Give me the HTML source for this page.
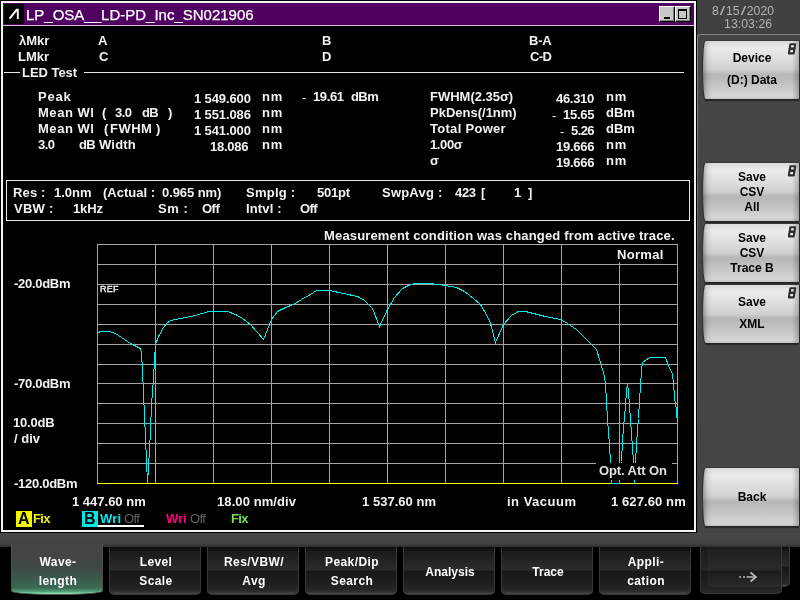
<!DOCTYPE html>
<html><head><meta charset="utf-8"><title>OSA</title>
<style>
html,body{margin:0;padding:0;background:#000;}
body{width:800px;height:600px;position:relative;overflow:hidden;font-family:"Liberation Sans",sans-serif;}
#all{position:absolute;left:0;top:0;width:800px;height:600px;will-change:transform;}
#rp{position:absolute;left:697px;top:0;width:103px;height:546px;background:#414141;}
#rpf{position:absolute;left:697px;top:34px;width:110px;height:512px;background:#454545;border-radius:4px 0 0 0;box-sizing:border-box;border-top:1px solid #868686;}
#rpf:before{content:"";position:absolute;left:0;top:0;width:1px;height:100%;border-radius:4px 0 0 0;background:linear-gradient(#868686 0,#707070 30%,#3a3a3a 100%);}
#win{position:absolute;left:1px;top:1px;width:691px;height:527px;border:2px solid #f4f4f4;background:#000;}
#title{position:absolute;left:3px;top:3px;width:691px;height:22px;background:#500060;border-bottom:1px solid #c8c8c8;}
#ticon{position:absolute;left:4px;top:4px;width:20px;height:20px;background:#000;}
#ttext{-webkit-text-stroke:0.25px #fff;position:absolute;left:26px;top:6px;color:#fff;font-size:15px;line-height:18px;white-space:nowrap;letter-spacing:0}
.wb{position:absolute;top:6px;width:14px;height:14px;background:#c8c8c8;border:1px solid;border-color:#fff #000 #000 #fff;box-shadow:inset -1px -1px 0 #808080;}
.t{position:absolute;white-space:pre;color:#f2f2f2;font-size:13px;line-height:16px;font-weight:bold;}
.b{font-weight:bold;}
.date{position:absolute;color:#b4b4b4;font-size:12.2px;line-height:14px;white-space:nowrap;letter-spacing:0.1px}
.date i{font-style:normal;display:inline-block;padding:0 1.75px;transform:scaleX(1.6)}
.rb{position:absolute;left:703px;width:96px;height:58px;border-radius:2.5px 0 0 2.5px / 29px 0 0 29px;background:linear-gradient(90deg,rgba(0,0,0,.30) 0,rgba(0,0,0,.08) 4px,rgba(0,0,0,0) 9px,rgba(0,0,0,0) 89px,rgba(0,0,0,.22) 96px),linear-gradient(#dadada 0%,#ebebeb 12%,#dcdcdc 35%,#d0d0d0 50%,#b8b8b8 57%,#bababa 64%,#d6d6d6 95%,#c4c4c4 100%);box-shadow:-1px 0 0 #303030,0 -1px 0 #383838,0 2px 1px #262626,1px 0 0 #2a2a2a;}
.rbt{position:absolute;left:0;width:98px;top:-1px;height:58px;display:flex;flex-direction:column;justify-content:center;text-align:center;color:#000;font-weight:bold;font-size:12px;}
.rb.l2 .rbt div{line-height:22px}
.rb.l3 .rbt{top:0}
.rb.l1 .rbt{top:0}
.rb.l3 .rbt div{line-height:15px}
.ic{position:absolute;left:84px;top:2px;}
#bbar{position:absolute;left:0;top:533px;width:800px;height:14px;background:linear-gradient(#474747,#444 75%,#2e2e2e);}
.bb{position:absolute;top:547px;width:92px;height:48px;border-radius:0 0 6px 6px / 0 0 4px 4px;background:linear-gradient(#0c0c0c 0%,#1a1a1a 10%,#242424 30%,#2c2c2c 48%,#181818 52%,#202020 80%,#2a2a2a 94%,#4a4a4a 100%);border:1px solid #383838;border-top:none;box-sizing:border-box}
.bb.act{top:544px;height:51px;background:linear-gradient(#444 0%,#434443 12%,#3f4843 45%,#3b584a 68%,#3a6a54 88%,#55a07c 95%,#98e8c0 100%);border-color:#4e4e4e;border-radius:0 0 40px 40px / 0 0 4px 4px;z-index:2}
.bb.act .bbt{top:4px}
.bb.one .bbt{top:1px;letter-spacing:0}
.bbt{position:absolute;left:1px;top:1px;letter-spacing:0.4px;width:100%;height:48px;display:flex;flex-direction:column;justify-content:center;text-align:center;color:#fff;font-weight:bold;font-size:12px;line-height:19px}
</style></head><body><div id="all">
<div id="rp"></div><div id="rpf"></div>
<div class="date" style="left:712px;top:4px">8<i>/</i>15<i>/</i>2020</div><div class="date" style="left:724px;top:17px">13:03:26</div>
<div class="rb l2" style="top:41px"><div class="rbt"><div>Device</div><div>(D:) Data</div></div><svg class="ic" width="10" height="12" viewBox="0 0 10 12"><g fill="rgba(255,255,255,.35)" stroke="#2e2e2e" stroke-width="2.1" stroke-linejoin="round"><path d="M3.4 1.2 H8.2 L7.5 5.6 H2.7 Z"/><path d="M2.6 5.9 H7.4 L6.7 10.4 H1.9 Z"/></g></svg></div>
<div class="rb l3" style="top:163px"><div class="rbt"><div>Save</div><div>CSV</div><div>All</div></div><svg class="ic" width="10" height="12" viewBox="0 0 10 12"><g fill="rgba(255,255,255,.35)" stroke="#2e2e2e" stroke-width="2.1" stroke-linejoin="round"><path d="M3.4 1.2 H8.2 L7.5 5.6 H2.7 Z"/><path d="M2.6 5.9 H7.4 L6.7 10.4 H1.9 Z"/></g></svg></div>
<div class="rb l3" style="top:224px"><div class="rbt"><div>Save</div><div>CSV</div><div>Trace B</div></div><svg class="ic" width="10" height="12" viewBox="0 0 10 12"><g fill="rgba(255,255,255,.35)" stroke="#2e2e2e" stroke-width="2.1" stroke-linejoin="round"><path d="M3.4 1.2 H8.2 L7.5 5.6 H2.7 Z"/><path d="M2.6 5.9 H7.4 L6.7 10.4 H1.9 Z"/></g></svg></div>
<div class="rb l2" style="top:285px"><div class="rbt"><div>Save</div><div>XML</div></div><svg class="ic" width="10" height="12" viewBox="0 0 10 12"><g fill="rgba(255,255,255,.35)" stroke="#2e2e2e" stroke-width="2.1" stroke-linejoin="round"><path d="M3.4 1.2 H8.2 L7.5 5.6 H2.7 Z"/><path d="M2.6 5.9 H7.4 L6.7 10.4 H1.9 Z"/></g></svg></div>
<div class="rb l1" style="top:468px"><div class="rbt"><div>Back</div></div></div>
<div id="win"></div>
<div id="title"></div><div id="ticon"><svg width="20" height="20"><path d="M5.6 14.6 L12.6 5.8 L13.8 5.8 L13.8 15" fill="none" stroke="#fff" stroke-width="1.9"/></svg></div>
<div id="ttext">LP_OSA__LD-PD_Inc_SN021906</div>
<div class="wb" style="left:659px"><div style="position:absolute;left:4px;top:10px;width:6px;height:2px;background:#000"></div></div>
<div class="wb" style="left:675px"><div style="position:absolute;left:2px;top:2px;width:7px;height:7px;border:1px solid #000;border-top-width:2px"></div></div>
<div style="position:absolute;left:4px;top:72px;width:16px;height:1px;background:#e8e8e8"></div>
<div style="position:absolute;left:84px;top:72px;width:600px;height:1px;background:#e8e8e8"></div>
<div style="position:absolute;left:6px;top:180px;width:682px;height:39px;border:1px solid #e8e8e8"></div>
<svg style="position:absolute;left:0;top:0" width="800" height="600" shape-rendering="crispEdges">
<rect x="97" y="244" width="1" height="239" fill="#a6a6a6"/>
<rect x="155" y="244" width="1" height="239" fill="#a6a6a6"/>
<rect x="213" y="244" width="1" height="239" fill="#a6a6a6"/>
<rect x="271" y="244" width="1" height="239" fill="#a6a6a6"/>
<rect x="329" y="244" width="1" height="239" fill="#a6a6a6"/>
<rect x="387" y="244" width="1" height="239" fill="#a6a6a6"/>
<rect x="445" y="244" width="1" height="239" fill="#a6a6a6"/>
<rect x="503" y="244" width="1" height="239" fill="#a6a6a6"/>
<rect x="561" y="244" width="1" height="239" fill="#a6a6a6"/>
<rect x="619" y="244" width="1" height="239" fill="#a6a6a6"/>
<rect x="677" y="244" width="1" height="239" fill="#a6a6a6"/>
<rect x="97" y="244" width="581" height="1" fill="#a6a6a6"/>
<rect x="97" y="264" width="581" height="1" fill="#a6a6a6"/>
<rect x="97" y="284" width="581" height="1" fill="#a6a6a6"/>
<rect x="97" y="304" width="581" height="1" fill="#a6a6a6"/>
<rect x="97" y="324" width="581" height="1" fill="#a6a6a6"/>
<rect x="97" y="344" width="581" height="1" fill="#a6a6a6"/>
<rect x="97" y="364" width="581" height="1" fill="#a6a6a6"/>
<rect x="97" y="383" width="581" height="1" fill="#a6a6a6"/>
<rect x="97" y="403" width="581" height="1" fill="#a6a6a6"/>
<rect x="97" y="423" width="581" height="1" fill="#a6a6a6"/>
<rect x="97" y="443" width="581" height="1" fill="#a6a6a6"/>
<rect x="97" y="463" width="581" height="1" fill="#a6a6a6"/>
<rect x="97" y="483" width="581" height="1" fill="#ffff00"/>
<polyline points="97.5,332.5 101.5,331.5 109.5,331.5 115.5,333.5 121.5,337.5 130.5,343.5 140.5,348.5 141.5,352.5 142.5,370.5 144.5,415.5 147.5,483.5 149.5,450.5 150.5,430.5 151.5,404.5 153.5,378.5 154.5,360.5 155.5,344.5 158.5,336.5 163.5,327.5 166.5,323.5 170.5,320.5 180.5,318.5 195.5,315.5 208.5,311.5 227.5,311.5 235.5,314.5 242.5,318.5 250.5,324.5 263.5,339.5 267.5,329.5 271.5,319.5 277.5,311.5 285.5,307.5 293.5,304.5 301.5,299.5 310.5,294.5 316.5,290.5 329.5,290.5 343.5,293.5 357.5,296.5 364.5,300.5 372.5,308.5 379.5,326.5 387.5,309.5 394.5,297.5 402.5,288.5 410.5,284.5 416.5,283.5 429.5,283.5 445.5,285.5 456.5,287.5 464.5,291.5 473.5,298.5 480.5,304.5 487.5,316.5 490.5,323.5 495.5,342.5 499.5,333.5 503.5,324.5 511.5,315.5 518.5,311.5 525.5,311.5 545.5,316.5 560.5,319.5 567.5,323.5 576.5,329.5 596.5,349.5 600.5,362.5 604.5,376.5 605.5,385.5 606.5,400.5 607.5,420.5 608.5,430.5 609.5,446.5 610.5,461.5 611.5,483.5 619.5,483.5 621.5,461.5 622.5,441.5 623.5,427.5 625.5,405.5 626.5,391.5 627.5,383.5 628.5,391.5 629.5,405.5 630.5,420.5 631.5,433.5 632.5,448.5 633.5,461.5 634.5,483.5 635.5,461.5 636.5,444.5 637.5,430.5 638.5,418.5 639.5,400.5 640.5,385.5 641.5,370.5 642.5,362.5 649.5,357.5 665.5,357.5 668.5,365.5 672.5,374.5 673.5,382.5 674.5,397.5 676.5,410.5 677.5,425.5 677.5,432.5" fill="none" stroke="#00f0f0" stroke-width="1"/>
<rect x="596" y="463" width="76" height="17" fill="#000"/>
<rect x="616" y="245" width="49" height="17" fill="#000"/>
<rect x="16" y="511" width="16" height="16" fill="#f4f400"/>
<rect x="82" y="511" width="16" height="16" fill="#00e8e8"/>
<rect x="98" y="525" width="46" height="2" fill="#fff"/>
</svg>
<span class="t" style="left:19px;top:33px;">λMkr</span>
<span class="t" style="left:98px;top:33px;">A</span>
<span class="t" style="left:322px;top:33px;">B</span>
<span class="t" style="left:529px;top:33px;letter-spacing:-0.20px;">B-A</span>
<span class="t" style="left:18px;top:49px;">LMkr</span>
<span class="t" style="left:99px;top:49px;">C</span>
<span class="t" style="left:322px;top:49px;">D</span>
<span class="t" style="left:530px;top:49px;letter-spacing:-0.60px;">C-D</span>
<span class="t" style="left:22px;top:65px;letter-spacing:-0.04px;">LED Test</span>
<span class="t" style="left:38px;top:89px;letter-spacing:0.75px;">Peak</span>
<span class="t" style="left:38px;top:105px;letter-spacing:0.54px;">Mean Wl</span>
<span class="t" style="left:102px;top:105px;">(</span>
<span class="t" style="left:115px;top:105px;letter-spacing:-0.50px;">3.0</span>
<span class="t" style="left:142px;top:105px;letter-spacing:-0.60px;">dB</span>
<span class="t" style="left:168px;top:105px;">)</span>
<span class="t" style="left:38px;top:121px;letter-spacing:0.54px;">Mean Wl</span>
<span class="t" style="left:104px;top:121px;">(</span>
<span class="t" style="left:110px;top:121px;letter-spacing:0.50px;">FWHM</span>
<span class="t" style="left:156px;top:121px;">)</span>
<span class="t" style="left:38px;top:137px;letter-spacing:-0.60px;">3.0</span>
<span class="t" style="left:79px;top:137px;letter-spacing:-0.60px;">dB</span>
<span class="t" style="left:99px;top:137px;letter-spacing:0.19px;">Width</span>
<span class="t" style="left:194px;top:91px;letter-spacing:-0.12px;">1 549.600</span>
<span class="t" style="left:194px;top:107px;letter-spacing:-0.12px;">1 551.086</span>
<span class="t" style="left:194px;top:123px;letter-spacing:-0.12px;">1 541.000</span>
<span class="t" style="left:210px;top:139px;letter-spacing:-0.25px;">18.086</span>
<span class="t" style="left:262px;top:89px;letter-spacing:0.75px;">nm</span>
<span class="t" style="left:262px;top:105px;letter-spacing:0.75px;">nm</span>
<span class="t" style="left:262px;top:121px;letter-spacing:0.75px;">nm</span>
<span class="t" style="left:262px;top:137px;letter-spacing:0.75px;">nm</span>
<span class="t" style="left:302px;top:90px;font-weight:normal;">-</span>
<span class="t" style="left:313px;top:89px;letter-spacing:-0.38px;">19.61</span>
<span class="t" style="left:351px;top:89px;letter-spacing:-0.60px;">dBm</span>
<span class="t" style="left:430px;top:89px;letter-spacing:-0.01px;">FWHM(2.35σ)</span>
<span class="t" style="left:430px;top:105px;">PkDens(/1nm)</span>
<span class="t" style="left:430px;top:121px;letter-spacing:0.29px;">Total Power</span>
<span class="t" style="left:430px;top:137px;letter-spacing:-0.38px;">1.00σ</span>
<span class="t" style="left:430px;top:153px;">σ</span>
<span class="t" style="left:556px;top:91px;letter-spacing:-0.30px;">46.310</span>
<span class="t" style="left:552px;top:108px;font-weight:normal;">-</span>
<span class="t" style="left:563px;top:107px;letter-spacing:-0.25px;">15.65</span>
<span class="t" style="left:560px;top:124px;font-weight:normal;">-</span>
<span class="t" style="left:571px;top:123px;letter-spacing:-0.60px;">5.26</span>
<span class="t" style="left:556px;top:139px;letter-spacing:-0.28px;">19.666</span>
<span class="t" style="left:556px;top:155px;letter-spacing:-0.28px;">19.666</span>
<span class="t" style="left:606px;top:89px;letter-spacing:0.90px;">nm</span>
<span class="t" style="left:606px;top:105px;">dBm</span>
<span class="t" style="left:606px;top:121px;">dBm</span>
<span class="t" style="left:606px;top:137px;letter-spacing:0.90px;">nm</span>
<span class="t" style="left:606px;top:153px;letter-spacing:0.90px;">nm</span>
<span class="t" style="left:13px;top:185px;letter-spacing:0.15px;">Res :</span>
<span class="t" style="left:54px;top:185px;">1.0nm</span>
<span class="t" style="left:103px;top:185px;">(Actual :</span>
<span class="t" style="left:162px;top:185px;letter-spacing:-0.07px;">0.965 nm)</span>
<span class="t" style="left:246px;top:185px;letter-spacing:0.25px;">Smplg :</span>
<span class="t" style="left:317px;top:185px;letter-spacing:-0.25px;">501pt</span>
<span class="t" style="left:382px;top:185px;letter-spacing:0.21px;">SwpAvg :</span>
<span class="t" style="left:455px;top:185px;letter-spacing:-0.30px;">423</span>
<span class="t" style="left:481px;top:185px;">[</span>
<span class="t" style="left:514px;top:185px;">1</span>
<span class="t" style="left:528px;top:185px;">]</span>
<span class="t" style="left:14px;top:201px;letter-spacing:0.28px;">VBW :</span>
<span class="t" style="left:73px;top:201px;letter-spacing:-0.13px;">1kHz</span>
<span class="t" style="left:158px;top:201px;letter-spacing:0.53px;">Sm :</span>
<span class="t" style="left:202px;top:201px;letter-spacing:-0.50px;">Off</span>
<span class="t" style="left:246px;top:201px;letter-spacing:0.15px;">Intvl :</span>
<span class="t" style="left:300px;top:201px;letter-spacing:-0.60px;">Off</span>
<span class="t" style="left:324px;top:228px;letter-spacing:0.16px;">Measurement condition was changed from active trace.</span>
<span class="t" style="left:617px;top:247px;letter-spacing:0.32px;">Normal</span>
<span class="t" style="left:14px;top:276px;letter-spacing:-0.29px;">-20.0dBm</span>
<span class="t" style="left:14px;top:376px;letter-spacing:-0.29px;">-70.0dBm</span>
<span class="t" style="left:13px;top:415px;letter-spacing:-0.20px;">10.0dB</span>
<span class="t" style="left:14px;top:431px;">/ div</span>
<span class="t" style="left:14px;top:476px;letter-spacing:-0.28px;">-120.0dBm</span>
<span class="t" style="left:72px;top:494px;">1 447.60 nm</span>
<span class="t" style="left:217px;top:494px;letter-spacing:0.09px;">18.00 nm/div</span>
<span class="t" style="left:362px;top:494px;letter-spacing:0.03px;">1 537.60 nm</span>
<span class="t" style="left:507px;top:494px;letter-spacing:0.49px;">in Vacuum</span>
<span class="t" style="left:611px;top:494px;letter-spacing:0.10px;">1 627.60 nm</span>
<span class="t" style="left:599px;top:463px;color:#e0e0e0;letter-spacing:-0.10px;">Opt. Att On</span>
<span class="t" style="left:33px;top:511px;color:#f0f000;letter-spacing:-0.60px;">Fix</span>
<span class="t" style="left:100px;top:511px;color:#00e8e8;letter-spacing:0.25px;">Wri</span>
<span class="t" style="left:124px;top:511px;font-weight:normal;color:#606060;letter-spacing:-0.60px;">Off</span>
<span class="t" style="left:166px;top:511px;color:#ff0080;">Wri</span>
<span class="t" style="left:190px;top:511px;font-weight:normal;color:#606060;letter-spacing:-0.60px;">Off</span>
<span class="t" style="left:231px;top:511px;color:#70e050;letter-spacing:-0.60px;">Fix</span>
<span class="t" style="left:100px;top:281px;font-size:9px;font-weight:normal;color:#ffffff;letter-spacing:0.25px;-webkit-text-stroke:0.3px #fff;">REF</span>
<span class="t" style="left:18px;top:511px;font-size:16px;color:#000;">A</span>
<span class="t" style="left:84px;top:511px;font-size:16px;color:#000;">B</span>
<div id="bbar"></div>
<div class="bb act" style="left:11px"><div class="bbt"><div>Wave-</div><div>length</div></div></div>
<div class="bb" style="left:109px"><div class="bbt"><div>Level</div><div>Scale</div></div></div>
<div class="bb" style="left:207px"><div class="bbt"><div>Res/VBW/</div><div>Avg</div></div></div>
<div class="bb" style="left:305px"><div class="bbt"><div>Peak/Dip</div><div>Search</div></div></div>
<div class="bb one" style="left:403px"><div class="bbt"><div>Analysis</div></div></div>
<div class="bb one" style="left:501px"><div class="bbt"><div>Trace</div></div></div>
<div class="bb" style="left:599px"><div class="bbt"><div>Appli-</div><div>cation</div></div></div>
<div class="bb" style="left:708px;width:82px;height:40px"></div>
<div class="bb" style="left:700px;width:82px;height:47px;background:linear-gradient(rgba(30,30,30,.85) 0%,rgba(44,44,44,.85) 50%,rgba(28,28,28,.85) 52%,rgba(46,46,46,.85) 100%)"></div>
<svg style="position:absolute;left:738px;top:571px" width="20" height="12"><g fill="none" stroke="#b8b8b8" stroke-width="1.7"><path d="M1 6H3M5 6H7M8.5 6H18"/><path d="M12.5 1.5L18 6L12.5 10.5" stroke-linejoin="miter"/></g></svg>
</div></body></html>
